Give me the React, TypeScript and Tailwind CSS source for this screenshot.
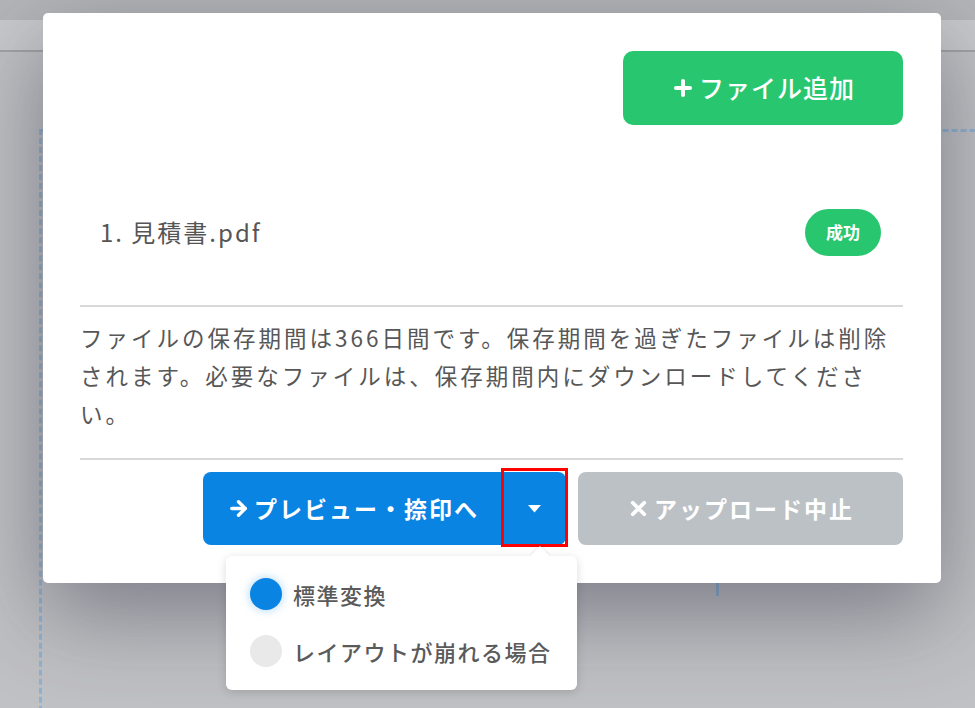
import React from "react";
import { ArrowRight, Plus, X } from "lucide-react";

const font = {
  fontFamily: '"Noto Sans CJK JP", "Noto Sans", sans-serif',
};

export default function App() {
  return (
    <div
      className="relative w-[975px] h-[708px] overflow-hidden bg-[#c0c1c4]"
      style={font}
    >
      {/* background page */}
      <div className="h-[20px] bg-[#b4b5b8]" />
      <div className="h-[32px] bg-[#c8c9cb] border-b-2 border-[#a2a3a5]" />
      <div className="absolute left-[39px] top-[129px] w-[1000px] h-[700px] border-[3px] border-dashed border-[#90b2d0]" />
      <div className="absolute left-[716px] top-[560px] w-[3px] h-[36px] bg-[#90b2d0]" />

      {/* modal */}
      <div className="absolute left-[43px] top-[13px] w-[898px] h-[570px] bg-white rounded-[5px] shadow-[0_30px_90px_rgba(40,40,60,0.45)] pl-[37px] pr-[38px] pt-[38px] flex flex-col">
        <div className="flex justify-end">
          <button className="w-[280px] h-[74px] rounded-[10px] bg-[#28c76f] text-white text-[25px] tracking-[1px] font-medium flex items-center justify-center gap-[4px]">
            <Plus size={24} strokeWidth={4} />
            <span>ファイル追加</span>
          </button>
        </div>

        <div className="mt-[84px] h-[46px] flex items-center justify-between pl-[20px] pr-[22px]">
          <span className="text-[24px] tracking-[2px] text-[#555]">1. 見積書.pdf</span>
          <span className="w-[76px] h-[47px] rounded-full bg-[#28c76f] text-white text-[17px] font-bold flex items-center justify-center">
            成功
          </span>
        </div>

        <div className="mt-[50px] h-[2px] bg-[#d8d8d8]" />

        <p className="mt-[11px] text-[22.5px] tracking-[3px] leading-[38px] text-[#575757] whitespace-nowrap">
          ファイルの保存期間は366日間です。保存期間を過ぎたファイルは削除
          <br />
          されます。必要なファイルは、保存期間内にダウンロードしてくださ
          <br />
          い。
        </p>

        <div className="mt-[26px] h-[2px] bg-[#d8d8d8]" />

        <div className="mt-[12px] flex justify-end gap-[12px]">
          <div className="flex h-[73px] rounded-[8px] overflow-visible">
            <button className="w-[300px] h-full bg-[#0a84e3] rounded-l-[8px] text-white text-[23px] tracking-[2px] font-bold flex items-center justify-center gap-[4px]">
              <ArrowRight size={23} strokeWidth={3.5} />
              <span>プレビュー・捺印へ</span>
            </button>
            <div className="relative w-[63px] h-full">
              <button className="w-full h-full bg-[#0a84e3] rounded-r-[8px] flex items-center justify-center">
                <svg width="13" height="8" viewBox="0 0 13 8">
                  <path d="M0 0 L13 0 L6.5 7.5 Z" fill="white" />
                </svg>
              </button>
              <div className="absolute -left-[2px] -right-[2px] -top-[4px] -bottom-[2px] border-[3px] border-[#ff0000]" />
            </div>
          </div>
          <button className="w-[325px] h-[73px] rounded-[8px] bg-[#bcc1c6] text-white text-[23px] tracking-[2px] font-bold flex items-center justify-center gap-[4px]">
            <X size={23} strokeWidth={4} />
            <span>アップロード中止</span>
          </button>
        </div>
      </div>

      {/* dropdown menu */}
      <div className="absolute left-[226px] top-[556px] w-[351px] h-[134px] bg-white rounded-[6px] shadow-[0_2px_10px_rgba(0,0,0,0.15)] pl-[24px] pt-[22px] flex flex-col gap-[25px]">
        <div className="absolute -top-[7px] left-[307px] w-[14px] h-[14px] bg-white rotate-45 shadow-[-1px_-1px_2px_rgba(0,0,0,0.08)]" />
        <div className="relative flex items-center gap-[11px] h-[32px]">
          <span className="w-[32px] h-[32px] rounded-full bg-[#0a84e3] shadow-[0_0_10px_rgba(10,132,227,0.35)]" />
          <span className="text-[22px] tracking-[1.5px] font-medium text-[#5a5a5a]">標準変換</span>
        </div>
        <div className="relative flex items-center gap-[11px] h-[32px]">
          <span className="w-[32px] h-[32px] rounded-full bg-[#e9e9e9]" />
          <span className="text-[22px] tracking-[1.5px] font-medium text-[#5a5a5a]">
            レイアウトが崩れる場合
          </span>
        </div>
      </div>
    </div>
  );
}
